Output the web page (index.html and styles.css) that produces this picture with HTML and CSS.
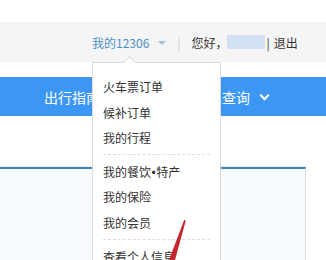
FILE: index.html
```html
<!DOCTYPE html>
<html>

<head>
    <title>12306</title>
    <meta charset="utf-8">
    <link rel="stylesheet" href="styles.css">
</head>

<body>
    <div class="top"></div>
    <div class="bar">
        <div class="my">
            <a class="mylink" href="#">我的12306<span class="tri"></span></a>
            <div class="dropdown">
                <span class="caret"></span>
                <a href="#">火车票订单</a>
                <a href="#">候补订单</a>
                <a href="#">我的行程</a>
                <hr>
                <a href="#">我的餐饮<span class="dot">•</span>特产</a>
                <a href="#">我的保险</a>
                <a href="#">我的会员</a>
                <hr>
                <a href="#">查看个人信息</a>
            </div>
        </div>
        <span class="sep">|</span>
        <span class="hello">您好，</span>
        <span class="name"></span>
        <span class="sep2">|</span>
        <a class="logout" href="#">退出</a>
    </div>
    <nav class="menu">
        <a href="#">出行指南<span class="chev"></span></a>
        <a href="#">信息查询<span class="chev"></span></a>
    </nav>
    <section class="panel"></section>

    <svg class="arrow" width="30" height="50" viewBox="0 0 30 50">
        <polygon points="14.2,0 15.8,0.6 5,40 -1,40" fill="#c4262b" />
    </svg>
</body>

</html>
```

FILE: styles.css
```css
body {
    margin: 0;
    font-family: "Noto Sans CJK SC", "Liberation Sans", sans-serif;
    font-size: 12px;
    color: #333;
    background: #fff;
    overflow: hidden;
    height: 260px;
    position: relative;
}

a {
    text-decoration: none;
    color: #333;
}

.top {
    height: 22px;
}

.bar {
    height: 40px;
    background: #f5f5f5;
    display: flex;
    align-items: center;
    padding-left: 92px;
}

.my {
    position: relative;
    height: 40px;
    display: flex;
    align-items: center;
}

.mylink {
    color: #4a90c8;
    display: flex;
    align-items: center;
}

.tri {
    margin-left: 9px;
    width: 0;
    height: 0;
    border-left: 4.5px solid transparent;
    border-right: 4.5px solid transparent;
    border-top: 4px solid #9dc4de;
    margin-top: 2px;
}

.sep {
    color: #d0d0d0;
    margin-left: 11px;
    margin-right: 11px;
}

.name {
    width: 38px;
    height: 14px;
    background: #d3e1f6;
    margin-left: -1px;
}

.sep2 {
    margin-left: 2px;
    margin-right: 4px;
}

.dropdown {
    position: absolute;
    top: 100%;
    left: 0;
    width: 107px;
    height: 200px;
    padding: 11px 10px 0;
    background: #fff;
    border: 1px solid #dcdcdc;
    z-index: 5;
}

.dropdown a {
    display: block;
    height: 25.6px;
    line-height: 25.6px;
    white-space: nowrap;
}

.dot {
    font-family: "Liberation Sans", sans-serif;
    margin: 0 0.5px;
}

.dropdown hr {
    border: none;
    border-top: 1px dashed #dedede;
    margin: 3.5px 0;
}

.caret {
    position: absolute;
    top: -5px;
    left: 32px;
    width: 8px;
    height: 8px;
    background: #fff;
    border-left: 1px solid #dcdcdc;
    border-top: 1px solid #dcdcdc;
    transform: rotate(45deg);
}

.menu {
    margin-top: 15px;
    height: 39px;
    background: #3b97f3;
    display: flex;
    align-items: center;
    padding-left: 44px;
    gap: 76px;
}

.menu a {
    color: #fff;
    font-size: 14px;
    display: flex;
    align-items: center;
}

.chev {
    width: 5px;
    height: 5px;
    border-right: 2px solid #fff;
    border-bottom: 2px solid #fff;
    transform: rotate(45deg);
    margin-left: 11px;
    margin-top: -3px;
}

.panel {
    margin-top: 51px;
    width: 305px;
    height: 92px;
    background: #f7fbfe;
    border-top: 2px solid #4584bd;
    border-right: 1px solid #dadada;
    box-shadow: 0 -1px 0 #e2f6fc;
}

.arrow {
    position: absolute;
    left: 170px;
    top: 220px;
    z-index: 6;
}
```
